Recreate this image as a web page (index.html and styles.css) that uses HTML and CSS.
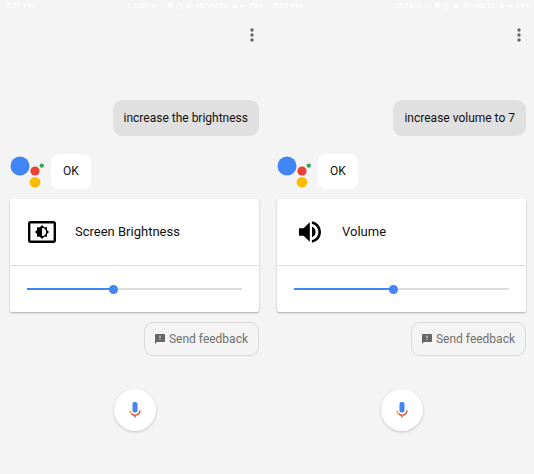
FILE: index.html
```
<!DOCTYPE html>
<html lang="en">

<head>
    <meta charset="UTF-8">
    <meta name="viewport" content="width=device-width, initial-scale=1.0">
    <title>Assistant</title>
    <link rel="stylesheet" href="styles.css">
</head>

<body>
    <svg class="defs" aria-hidden="true">
        <symbol id="more" viewBox="0 0 4 14">
            <circle cx="2" cy="2" r="1.7" />
            <circle cx="2" cy="7" r="1.7" />
            <circle cx="2" cy="12" r="1.7" />
        </symbol>
        <symbol id="assistant" viewBox="0 0 35 34">
            <circle cx="10" cy="11" r="9.5" fill="#4285f4" />
            <circle cx="25" cy="16" r="4.6" fill="#ea4335" />
            <circle cx="31.8" cy="10.6" r="2.2" fill="#34a853" />
            <circle cx="25" cy="27.3" r="5.4" fill="#fbbc05" />
        </symbol>
        <symbol id="feedback" viewBox="2 2 20 20">
            <path d="M20 2H4c-1.1 0-2 .9-2 2v18l4-4h14c1.1 0 2-.9 2-2V4c0-1.1-.9-2-2-2zm-7 12h-2v-2h2v2zm0-4h-2V5h2v5z" />
        </symbol>
        <symbol id="mic" viewBox="0 0 12 16">
            <rect x="3.5" y="0" width="5" height="10.5" rx="2" fill="#4285f4" />
            <path d="M1 8.5A5 5 0 0 0 2.5 11.8" fill="none" stroke="#f9a825" stroke-width="1.4" />
            <path d="M2.5 11.8A5 5 0 0 0 11 8.5M6 13v2.5" fill="none" stroke="#d64a35" stroke-width="1.4" />
        </symbol>
    </svg>

    <div class="screen">
        <div class="status"><span>5:21 PM</span><span>1.78K/s ⋯ ✱ ◷ ▲ 4G VoLTE ▲ ▪▪ 79%</span></div>
        <div class="toolbar">
            <button class="menu" aria-label="More options"><svg><use href="#more" /></svg></button>
        </div>
        <div class="query">increase the brightness</div>
        <div class="answer">
            <svg class="logo"><use href="#assistant" /></svg>
            <div class="reply">OK</div>
        </div>
        <div class="card">
            <label class="cardTitle" for="brightness">
                <svg class="cardIcon" viewBox="0 0 28 22">
                    <rect x="1.2" y="1.2" width="25.6" height="19.6" rx="1.5" fill="none" stroke="#000" stroke-width="2.4" />
                    <path d="M14 4l2.200 2.200h2.800v2.800l2 2-2 2v2.800h-2.800L14 18l-2.200-2.200H9v-2.800l-2-2 2-2V6.200h2.800z" />
                    <path d="M14 7a4 4 0 0 1 0 8z" fill="#fff" />
                </svg>
                Screen Brightness
            </label>
            <div class="control">
                <input type="range" id="brightness" min="0" max="100" value="40" style="--value: 40%">
            </div>
        </div>
        <button class="feedback"><svg><use href="#feedback" /></svg>Send feedback</button>
        <button class="mic" aria-label="Speak"><svg><use href="#mic" /></svg></button>
    </div>

    <div class="screen">
        <div class="status"><span>5:20 PM</span><span>12.1K/s ⋯ ✱ ◷ ▲ 4G VoLTE ▲ ▪▪ 79%</span></div>
        <div class="toolbar">
            <button class="menu" aria-label="More options"><svg><use href="#more" /></svg></button>
        </div>
        <div class="query">increase volume to 7</div>
        <div class="answer">
            <svg class="logo"><use href="#assistant" /></svg>
            <div class="reply">OK</div>
        </div>
        <div class="card">
            <label class="cardTitle" for="volume">
                <svg class="cardIcon" viewBox="0 0 28 22">
                    <path d="M4 7.3v7.4h4.6l6.2 6.1V1.200L8.600 7.3z" />
                    <path d="M17 5.8v10.4a5.6 5.6 0 0 0 0-10.4z" />
                    <path d="M17 1.5a9.7 9.7 0 0 1 0 19" fill="none" stroke="#000" stroke-width="2.6" />
                </svg>
                Volume
            </label>
            <div class="control">
                <input type="range" id="volume" min="0" max="100" value="46" style="--value: 46%">
            </div>
        </div>
        <button class="feedback"><svg><use href="#feedback" /></svg>Send feedback</button>
        <button class="mic" aria-label="Speak"><svg><use href="#mic" /></svg></button>
    </div>
</body>

</html>
```
FILE: styles.css
```
* {
    box-sizing: border-box;
}

body {
    margin: 0;
    min-height: 100vh;
    display: grid;
    grid-template-columns: 1fr 1fr;
    background: #f4f4f4;
    color: #111;
    font-family: Roboto, sans-serif;
    font-size: 12px;
    line-height: 16px;
}

button {
    padding: 0;
    border: none;
    background: none;
    font: inherit;
    cursor: pointer;
}

.defs {
    display: none;
}

.screen {
    display: flex;
    flex-direction: column;
    padding: 0 8px 0 10px;
}

.status {
    display: flex;
    justify-content: space-between;
    height: 12px;
    margin: 0 -4px;
    color: #fff;
    font-size: 8px;
    line-height: 12px;
}

.toolbar {
    display: flex;
    justify-content: flex-end;
    padding: 13px 0 12px;
}

.menu {
    width: 14px;
    height: 20px;
    display: flex;
    justify-content: center;
    align-items: center;
}

.menu svg {
    width: 4px;
    height: 14px;
    fill: #666;
}

.query {
    align-self: flex-end;
    margin-top: 43px;
    padding: 10px 11px;
    border-radius: 9px;
    background: #e0e0e0;
}

.answer {
    display: flex;
    align-items: center;
    gap: 6px;
    margin-top: 18px;
}

.logo {
    width: 35px;
    height: 34px;
}

.reply {
    padding: 9px 12px 10px;
    border-radius: 8px;
    background: #fff;
}

.card {
    margin-top: 10px;
    border-radius: 2px;
    background: #fff;
    box-shadow: 0 1px 2px rgba(0, 0, 0, 0.3);
}

.cardTitle {
    display: flex;
    align-items: center;
    gap: 19px;
    height: 66px;
    padding: 0 18px;
    font-size: 13px;
}

.cardIcon {
    width: 28px;
    height: 22px;
}

.control {
    padding: 16px 17px;
    border-top: 1px solid #ddd;
}

input[type="range"] {
    -webkit-appearance: none;
    appearance: none;
    display: block;
    width: 100%;
    height: 14px;
    margin: 0;
    background: linear-gradient(#4285f4, #4285f4) left center / var(--value) 2px no-repeat,
        linear-gradient(#ddd, #ddd) center / 100% 2px no-repeat;
}

input[type="range"]::-webkit-slider-thumb {
    -webkit-appearance: none;
    width: 9px;
    height: 9px;
    border-radius: 50%;
    background: #4285f4;
}

.feedback {
    align-self: flex-end;
    display: flex;
    align-items: center;
    gap: 4px;
    margin-top: 10px;
    padding: 8px 10px;
    border: 1px solid #d8d8d8;
    border-radius: 9px;
    color: #707070;
}

.feedback svg {
    width: 10px;
    height: 10px;
    fill: #666;
}

.mic {
    align-self: center;
    display: flex;
    justify-content: center;
    align-items: center;
    width: 42px;
    height: 42px;
    margin-top: 33px;
    border-radius: 50%;
    background: #fff;
    box-shadow: 0 1px 3px rgba(0, 0, 0, 0.2);
}

.mic svg {
    width: 12px;
    height: 16px;
}
```
